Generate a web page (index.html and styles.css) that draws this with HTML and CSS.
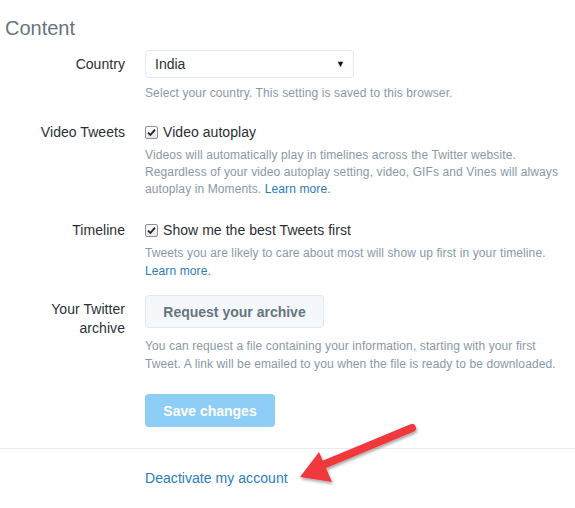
FILE: index.html
```html
<!DOCTYPE html>
<html>
<head>
<meta charset="utf-8">
<link rel="stylesheet" href="styles.css">
</head>
<body>
<div class="page">
  <h2 class="heading">Content</h2>

  <div class="row row-country">
    <div class="label">Country</div>
    <div class="control">
      <div class="select"><span>India</span><span class="caret">▼</span></div>
      <p class="help help-country">Select your country. This setting is saved to this browser.</p>
    </div>
  </div>

  <div class="row row-video">
    <div class="label label-line">Video Tweets</div>
    <div class="control">
      <label class="check"><span class="box"><svg width="9" height="9" viewBox="0 0 9 9"><path d="M1 4.6 L3.4 7 L8 1.6" fill="none" stroke="#222" stroke-width="1.8"/></svg></span>Video autoplay</label>
      <p class="help help-tight">Videos will automatically play in timelines across the Twitter website. Regardless of your video autoplay setting, video, GIFs and Vines will always autoplay in Moments. <a href="#" class="link">Learn more.</a></p>
    </div>
  </div>

  <div class="row row-timeline">
    <div class="label label-line">Timeline</div>
    <div class="control">
      <label class="check"><span class="box"><svg width="9" height="9" viewBox="0 0 9 9"><path d="M1 4.6 L3.4 7 L8 1.6" fill="none" stroke="#222" stroke-width="1.8"/></svg></span>Show me the best Tweets first</label>
      <p class="help help-tl">Tweets you are likely to care about most will show up first in your timeline. <a href="#" class="link">Learn more.</a></p>
    </div>
  </div>

  <div class="row row-archive">
    <div class="label label-archive">Your Twitter<br>archive</div>
    <div class="control">
      <button class="btn-archive">Request your archive</button>
      <p class="help help-archive">You can request a file containing your information, starting with your first Tweet. A link will be emailed to you when the file is ready to be downloaded.</p>
    </div>
  </div>

  <div class="row row-save">
    <div class="label"></div>
    <div class="control">
      <button class="btn-save">Save changes</button>
    </div>
  </div>

  <hr class="sep">

  <div class="row row-deact">
    <div class="label"></div>
    <div class="control">
      <a href="#" class="deact">Deactivate my account</a>
    </div>
  </div>

  <svg class="arrow" width="575" height="508" viewBox="0 0 575 508">
    <defs>
      <filter id="sh" x="-20%" y="-20%" width="140%" height="140%">
        <feDropShadow dx="1" dy="2" stdDeviation="1.5" flood-color="#000" flood-opacity="0.35"/>
      </filter>
    </defs>
    <g filter="url(#sh)">
      <line x1="412" y1="428" x2="318" y2="467" stroke="#f0393e" stroke-width="8" stroke-linecap="round"/>
      <polygon points="300,477 319,452 332,482" fill="#f0393e"/>
    </g>
  </svg>
</div>
</body>
</html>
```

FILE: styles.css
```css
* { box-sizing: border-box; }
html, body { margin: 0; padding: 0; background: #fff; }
body {
  font-family: "Liberation Sans", Arial, sans-serif;
  color: #292f33;
  width: 575px;
  height: 508px;
  overflow: hidden;
}
.page { position: relative; width: 575px; height: 508px; }

.heading {
  margin: 0;
  padding: 16px 0 0 5px;
  font-size: 20px;
  line-height: 24px;
  font-weight: normal;
  color: #66757f;
}

.row {
  display: grid;
  grid-template-columns: 125px 1fr;
  column-gap: 20px;
}
.label {
  text-align: right;
  font-size: 14px;
  letter-spacing: 0.05px;
  color: #292f33;
}
.control { padding-right: 8px; }

.row-country { margin-top: 10px; }
.row-country .label { line-height: 28px; }

.select {
  width: 209px;
  height: 28px;
  border: 1px solid #e1e8ed;
  border-radius: 4px;
  display: flex;
  align-items: center;
  justify-content: space-between;
  padding: 0 8px 0 9px;
  font-size: 14px;
  color: #292f33;
}
.caret { font-size: 9px; color: #111; }

.help {
  margin: 0;
  font-size: 12px;
  line-height: 18px;
  letter-spacing: 0.11px;
  color: #8899a6;
}
.help-country { margin-top: 6px; }
.help-tight { margin-top: 5px; line-height: 17px; }
.help-tl { margin-top: 4px; }
.help-archive { margin-top: 9px; }

.link { color: #2b7bb9; text-decoration: none; display: inline-block; }

.row-video { margin-top: 20px; }
.row-timeline { margin-top: 22px; }
.label-line { line-height: 20px; }

.check {
  display: flex;
  align-items: center;
  font-size: 14px;
  line-height: 20px;
  letter-spacing: 0.05px;
  color: #292f33;
}
.box {
  width: 13px;
  height: 13px;
  border: 1px solid #8f8f9d;
  border-radius: 2px;
  background: linear-gradient(#fdfdfd, #e6e6e6);
  margin-right: 5px;
  display: flex;
  align-items: center;
  justify-content: center;
}

.row-archive { margin-top: 15px; }
.label-archive { padding-top: 5px; line-height: 19px; }

.btn-archive {
  width: 179px;
  height: 33px;
  border: 1px solid #e1e8ed;
  border-radius: 4px;
  background: #f5f8fa;
  color: #66757f;
  font-family: "Liberation Sans", Arial, sans-serif;
  font-size: 14px;
  font-weight: bold;
  padding: 0;
  display: block;
}

.row-save { margin-top: 21px; }
.btn-save {
  width: 130px;
  height: 33px;
  border: none;
  border-radius: 4px;
  background: #8ecdf5;
  color: #fff;
  font-family: "Liberation Sans", Arial, sans-serif;
  font-size: 14px;
  font-weight: bold;
  padding: 0;
  display: block;
}

.sep {
  margin: 21px 0 0 0;
  border: none;
  border-top: 1px solid #e6ecf0;
  height: 0;
}

.row-deact { margin-top: 19px; }
.deact {
  font-size: 14px;
  line-height: 20px;
  letter-spacing: 0.05px;
  color: #2b7bb9;
  text-decoration: none;
}

.arrow { position: absolute; left: 0; top: 0; pointer-events: none; }
```
